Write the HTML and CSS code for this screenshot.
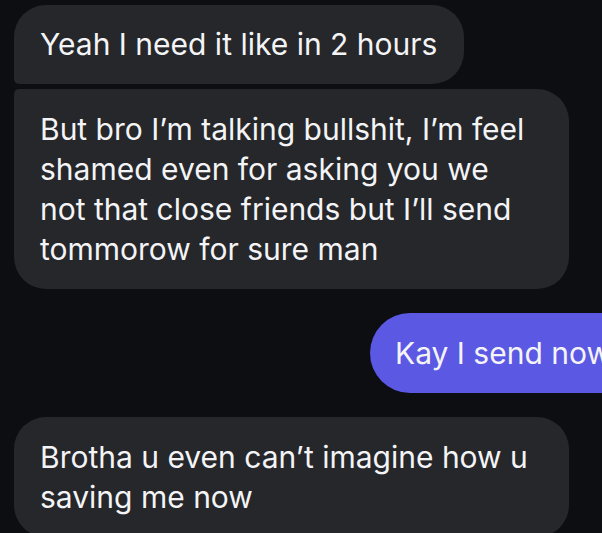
FILE: index.html
```html
<!DOCTYPE html>
<html lang="en">
<head>
<meta charset="utf-8">
<title>Chat</title>
<link rel="stylesheet" href="styles.css">
</head>
<body>
<main class="thread">
  <div class="group">
    <div class="bubble in first">Yeah I need it like in 2 hours</div>
    <div class="bubble in last full">But bro I’m talking bullshit, I’m feel<br>shamed even for asking you we<br>not that close friends but I’ll send<br>tommorow for sure man</div>
  </div>
  <div class="bubble out">Kay I send now</div>
  <div class="bubble in single full">Brotha u even can’t imagine how u<br>saving me now</div>
</main>
</body>
</html>
```

FILE: styles.css
```css
html, body {
  margin: 0;
  height: 533px;
  overflow: hidden;
  background: #0c0e12;
}

body {
  font-family: Inter, "Noto Sans", "Liberation Sans", sans-serif;
  color: #f4f4f6;
}

.thread {
  display: flex;
  flex-direction: column;
  align-items: flex-start;
  gap: 24px;
  padding: 5px 0 0 14px;
}

.group {
  display: flex;
  flex-direction: column;
  align-items: flex-start;
  gap: 5px;
}

.bubble {
  box-sizing: border-box;
  font-size: 30px;
  line-height: 40px;
  padding: 19px 27px 20px 26px;
  background: #25272b;
  border-radius: 32px;
  white-space: nowrap;
}

.bubble.full {
  width: 555px;
  padding-top: 20px;
}

.bubble.first {
  border-bottom-left-radius: 5px;
}

.bubble.last {
  border-top-left-radius: 5px;
}

.bubble.out {
  background: #5b58e4;
  margin-left: 356px;
  padding: 20px 30px 20px 25px;
  border-radius: 40px;
}
```
